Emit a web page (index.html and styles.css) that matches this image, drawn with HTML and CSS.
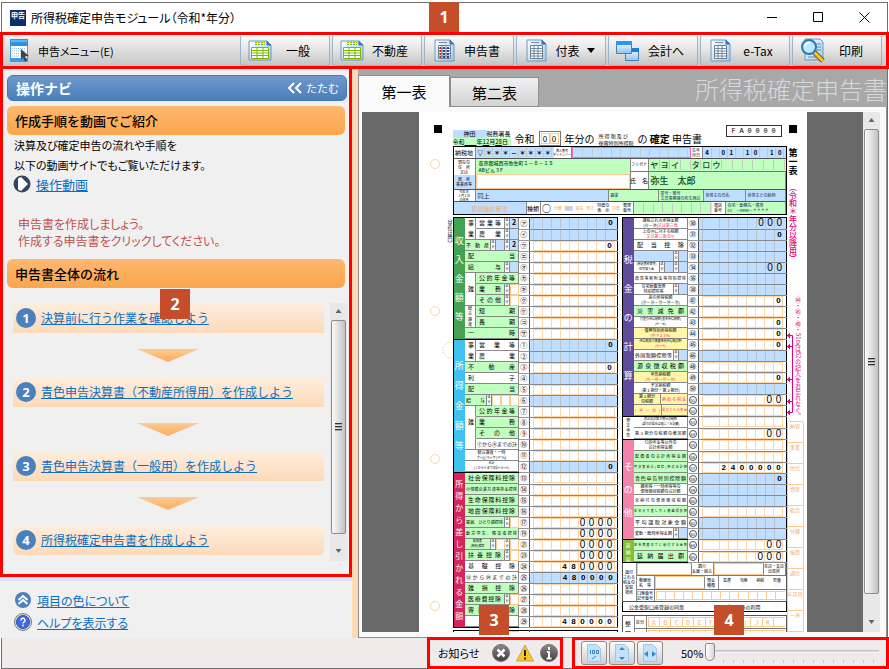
FILE: index.html
```html
<!DOCTYPE html>
<html lang="ja">
<head>
  <meta charset="UTF-8">
  <meta name="viewport" content="width=device-width, initial-scale=1.0">
  <title>所得税確定申告モジュール</title>
  <link rel="stylesheet" href="styles.css">
</head>
<body>

  <svg width="0" height="0" class="defs" aria-hidden="true">
    <defs>
      <linearGradient id="paperBlue" x1="0" y1="0" x2="1" y2="1"><stop offset="0" stop-color="#fff"/><stop offset="1" stop-color="#9cc8ef"/></linearGradient>
      <linearGradient id="winBlue" x1="0" y1="0" x2="0" y2="1"><stop offset="0" stop-color="#fff"/><stop offset="1" stop-color="#8cc4f2"/></linearGradient>
      <linearGradient id="darkRound" x1="0" y1="0" x2="0" y2="1"><stop offset="0" stop-color="#8a8a8a"/><stop offset="1" stop-color="#3c3c3c"/></linearGradient>
    </defs>
    <symbol id="sheet" viewBox="0 0 24 24">
      <path d="M3 1h15l4 4v17H3z" fill="url(#paperBlue)" stroke="#6d96bd"/>
      <path d="M18 1v4h4" fill="#2f84d0" stroke="#2a6fb0"/>
      <path d="M7 3.500h8" stroke="#6f8da8"/>
      <path d="M6.500 6.500h12v13h-12z" fill="#fff" stroke="#6d8196"/>
      <path d="M6 9.500h12M6 12h12M6 14.500h12M6 17h12M10 7v13M14 7v13" stroke="#71869b" fill="none"/>
    </symbol>
    <symbol id="greenSheet" viewBox="0 0 24 24">
      <path d="M1 2h18l4 4v15H1z" fill="url(#paperBlue)" stroke="#6d96bd"/>
      <path d="M19 2v4h4" fill="#2f84d0" stroke="#2a6fb0"/>
      <path d="M7 3.500h10M7 5.500h10" stroke="#7cb800" stroke-dasharray="2 1"/>
      <path d="M3.500 8.500h17v11h-17z" fill="#fff" stroke="#7cb800"/>
      <path d="M3 11.500h18M3 14h18M3 16.500h18M9 8v12M15 8v12" stroke="#7cb800" fill="none"/>
    </symbol>
  </svg>

  <div class="window">
    <header class="titlebar">
      <span class="app-icon">申告</span>
      <h1>所得税確定申告モジュール（令和*年分）</h1>
      <span class="callout callout-1">1</span>
      <div class="window-buttons">
        <button aria-label="最小化"><svg width="11" height="11"><path d="M0 5.500h10" stroke="#000"/></svg></button>
        <button aria-label="最大化"><svg width="11" height="11"><path d="M.5.5h9v9h-9z" stroke="#000" fill="none"/></svg></button>
        <button aria-label="閉じる"><svg width="11" height="11"><path d="M.5.5l10 10M10.500.5l-10 10" stroke="#000"/></svg></button>
      </div>
    </header>

    <div class="toolbar">
      <button class="menu-button">
        <svg width="20" height="24" viewBox="0 0 20 24"><path d="M.5.5h17v21H.5z" fill="#fff" stroke="#4b9de0"/><path d="M0 0h18v7H0z" fill="#2d93e6"/><path d="M1 2h16" stroke="#9ed4fb"/><path d="M2 9.500h14M2 12h14M2 14.500h14M2 17h14" stroke="#8fbfe8" stroke-dasharray="1 1"/><path d="M0 19h18v4H0z" fill="#3d9ae6"/><path d="M11 10l8 7-4 .5 2 4-2 1-2-4-2 2z" fill="#444"/></svg>
        申告メニュー(E)
      </button>
      <button><svg width="24" height="24"><use href="#greenSheet"/></svg><span>一般</span></button>
      <button><svg width="24" height="24"><use href="#greenSheet"/></svg><span>不動産</span></button>
      <button><svg width="24" height="24"><use href="#sheet"/><path d="M8.500 8v11" stroke="#c33" stroke-width="2" stroke-dasharray="2 1"/><path d="M12 8v11M16 8v11" stroke="#348" stroke-width="2" stroke-dasharray="2 1"/></svg><span>申告書</span></button>
      <button><svg width="24" height="24"><use href="#sheet"/></svg><span>付表</span><svg class="drop" width="8" height="5"><path d="M0 0h8L4 5z"/></svg></button>
      <button><svg width="24" height="24"><path d="M9.500 9.500h13v12h-13z" fill="url(#winBlue)" stroke="#4a7eb5"/><path d="M9 9h14v4H9z" fill="#1c7cd6"/><path d="M.5 2.500h15v12H.5z" fill="url(#winBlue)" stroke="#4a7eb5"/><path d="M0 2h16v4H0z" fill="#2e96ec"/></svg><span>会計へ</span></button>
      <button><svg width="24" height="24"><use href="#sheet"/></svg><span>e-Tax</span></button>
      <button><svg width="26" height="26"><path d="M5 1h15l3 3v18H5z" fill="url(#paperBlue)" stroke="#6d96bd"/><path d="M15 6h6M16 9h5M16 12h5M8 19h8" stroke="#5c8db8"/><path d="M14 14l9 9" stroke="#7a5a00" stroke-width="5"/><path d="M14 14l9 9" stroke="#ffc51c" stroke-width="3"/><circle cx="9" cy="9" r="7" fill="#bfe7fd" stroke="#2a78b4" stroke-width="2"/><path d="M5 8a4 4 0 0 1 5-3" stroke="#fff" stroke-width="2" fill="none"/></svg><span>印刷</span></button>
    </div>

    <div class="content">
      <aside class="side">
        <nav class="navi">
          <span class="callout callout-2">2</span>
          <div class="navi-head"><h2>操作ナビ</h2><button><svg width="15" height="12"><path d="M7 1L2 6l5 5M14 1L9 6l5 5" stroke="#fff" stroke-width="2" fill="none"/></svg>たたむ</button></div>
          <h3>作成手順を動画でご紹介</h3>
          <p class="intro">決算及び確定申告の流れや手順を<br>以下の動画サイトでもご覧いただけます。</p>
          <div class="icon-link">
            <svg width="18" height="18"><circle cx="9" cy="9" r="8.500" fill="#33475c"/><path d="M5 3.500l3-1.500 7 7-7 7-3-1.500z" fill="#fff"/></svg>
            <a href="#">操作動画</a>
          </div>
          <p class="notice">申告書を作成しましょう。<br>作成する申告書をクリックしてください。</p>
          <h3>申告書全体の流れ</h3>
          <div class="flow">
            <ol>
              <li><b>1</b><a href="#">決算前に行う作業を確認しよう</a></li>
              <li><b>2</b><a href="#">青色申告決算書（不動産所得用）を作成しよう</a></li>
              <li><b>3</b><a href="#">青色申告決算書（一般用）を作成しよう</a></li>
              <li><b>4</b><a href="#">所得税確定申告書を作成しよう</a></li>
            </ol>
            <div class="scrollbar"><i class="up"></i><span class="thumb"></span><i class="down"></i></div>
          </div>
        </nav>
        <div class="side-links">
          <div class="icon-link">
            <svg width="18" height="18"><circle cx="9" cy="9" r="8" fill="#4d80ba"/><path d="M4.500 9L9 5l4.500 4M4.500 13L9 9l4.500 4" stroke="#fff" stroke-width="2" fill="none"/></svg>
            <a href="#">項目の色について</a>
          </div>
          <div class="icon-link">
            <svg width="18" height="18"><circle cx="9" cy="9" r="8.500" fill="#ddd" stroke="#777"/><circle cx="9" cy="9" r="6.500" fill="#3d6ae0" stroke="#2a4fb5"/><path d="M7 7.500a2 2 0 1 1 3 1.500q-1 .5-1 1.500M9 11.500v2" stroke="#fff" stroke-width="1.500" fill="none"/></svg>
            <a href="#">ヘルプを表示する</a>
          </div>
        </div>
      </aside>

      <main class="document">
        <div class="tabs">
          <button class="active">第一表</button><button>第二表</button>
          <span class="doc-title">所得税確定申告書</span>
        </div>
        <div class="viewer">
          <div class="desk">
            <div class="paper">
              <div class="gutter">
                <svg width="28" height="520"><path d="M15 13h8v8h-8z"/><g fill="none" stroke="#fcd3a0"><circle cx="16" cy="52" r="4.500"/><circle cx="16" cy="199" r="4.500"/><circle cx="16" cy="347" r="4.500"/><circle cx="16" cy="494" r="4.500"/><circle cx="32" cy="238" r="8" stroke-dasharray="2 1"/></g></svg>
                <span>（単位は円）</span>
              </div>
              <div class="form">
                <div class="form-head">
                  <div class="office"><div><span class="blue">神田</span>税務署長</div><div class="green">令和<u>　　</u>年<u>12</u>月<u>28</u>日</div></div>
                  <span class="era">令和</span><span class="year"><i>0</i><i>0</i></span><span class="era">年分の</span>
                  <span class="tax-name">所 得 税 及 び<br>復興特別所得税</span>
                  <span class="era">の <b>確定</b> 申告書</span>
                  <span class="form-code"><i>F</i><i>A</i><i>0</i><i>0</i><i>0</i><i>0</i></span>
                </div>

                <div class="taxpayer">
                  <div class="line h12">
                    <span class="lab mid w22">納税地</span><span class="boxes blue w78 stars" data-text="▽＊＊＊－＊＊＊＊"></span><span class="lab tiny w18">個人番号<br>マイナンバー</span><span class="boxes blue grow pink" data-text="　　　　　　　　　　　　"></span><span class="lab w12">生年<br>月日</span><span class="boxes blue w83 bold" data-text="4 01 10 10"></span>
                  </div>
                  <div class="line h31">
                    <div class="stack w22"><span class="lab grow">現在の<br>住　所<br>又は</span><span class="lab blue h14">居　所<br>事業所等</span></div>
                    <div class="stack address"><p class="green">東京都城西市弥生町１－８－１５<br>ABビル３F</p><p></p></div>
                    <div class="stack grow">
                      <div class="line h12"><span class="lab w18">フリガナ</span><span class="boxes green grow name" data-text="ヤヨイ　タロウ　　　　　　"></span></div>
                      <div class="line h19"><span class="lab mid w18">氏　名</span><span class="fill green grow name">弥生　太郎</span></div>
                    </div>
                  </div>
                  <div class="line h12">
                    <span class="lab tiny w22">令和 年<br>１月１日<br>の住所</span><span class="fill blue mid w133">同上</span><span class="fill green w50">職業</span><span class="fill green grow">屋号・雅号<br>文具事務機の弥生商店</span><span class="fill blue w42">世帯主の氏名</span><span class="fill blue w40">世帯主との続柄</span>
                  </div>
                  <div class="line h12">
                    <span class="lab mid blue w73 faint">振替継続希望</span><span class="lab mid w14">種類</span><span class="kind faint grow"><b>○</b><i>分離</i><i class="blue">国出</i><i>損失</i><i>修正</i><em>特農の<br>表　示</em><i>特農</i></span><span class="lab w12">整理<br>番号</span><span class="boxes green w78" data-text="　　　　　　　　"></span><span class="lab w14">電話<br>番号</span><span class="fill green w60">自宅・勤務先・携帯<br>03　－9999－＊＊＊＊</span>
                  </div>
                </div>

                <div class="columns">
                  <div>
                    <table id="incomeTable"></table>
                    <table id="afterTable"></table>
                  </div>
                  <div>
                    <table id="taxTable"></table>
                    <div class="refund">
                      <span class="lab w14">還付<br>される<br>税金の<br>受取<br>場所</span>
                      <div class="stack grow">
                        <div class="line h12"><span class="entry grow"></span><span class="lab w22">銀行<br>金庫・組合</span><span class="entry w50"></span><span class="lab w22">本店・支店<br>出張所</span></div>
                        <div class="line h14"><span class="lab w18">郵便局<br>名　等</span><span class="entry w50"></span><span class="lab w14">預金<br>種類</span><span class="kind grow"><span>普通<br><i>○</i></span><span>当座<br><i>○</i></span><span>納税<br><i>○</i></span><span>貯蓄<br><i>○</i></span></span></div>
                        <div class="line h12"><span class="lab w18">口座番号<br>記号番号</span><span class="boxes grow" data-text="　　　　　　　　　　　　　　"></span></div>
                      </div>
                    </div>
                    <div class="public line"><span>公金受取口座登録の同意</span><i>○</i><span>公金受取口座の利用</span><i>○</i></div>
                    <div class="office-use">
                      <span class="lab mid w12">整<br><br>理</span>
                      <div class="stack grow">
                        <div class="line h12"><span class="lab w12">区分</span><span class="boxes grow faint" data-text="ABCDEFGHIJK　"></span></div>
                        <div class="line h12"><span class="lab w12">異動</span><span class="boxes grow faint" data-text="　　年　　月　　日　　　"></span></div>
                      </div>
                    </div>
                  </div>
                </div>
              </div>

              <div class="margin-notes">
                <svg width="8" height="8"><path d="M0 0h8v8H0z"/></svg>
                <b class="sheet-name">第一表</b>
                <span class="version">（令和＊年分以降用）</span>
                <div class="reminder">
                  <svg width="7" height="122" fill="none" stroke="#e6007e"><path d="M0 38.500h5.500v77H0M0 49.500h5M0 82.500h5M0 104.500h5"/><path fill="#e6007e" stroke="none" d="M0 38.500l3-3v6zM0 49.500l3-3v6zM0 82.500l3-3v6zM0 104.500l3-3v6zM0 115.500l3-3v6z"/></svg>
                  <span>㊹・㊺・㊾・51又は52の記入をお忘れなく。</span>
                </div>
                <div class="stamps"><i>納管</i><i>事業</i><i>住民</i><i>資産</i><i>総合</i><i>分離</i><i>検算</i><i>通信</i><i>年月日</i><i>一連</i></div>
              </div>
            </div>
          </div>
          <div class="scrollbar"><i class="up"></i><span class="thumb"></span><i class="down"></i></div>
        </div>
      </main>
    </div>

    <footer class="statusbar">
      <div class="news">
        <span class="callout callout-3">3</span>
        <span>お知らせ</span>
        <svg width="18" height="18"><circle cx="9" cy="9" r="8.500" fill="url(#darkRound)" stroke="#777"/><path d="M5.500 5.500l7 7M12.500 5.500l-7 7" stroke="#fff" stroke-width="2.500"/></svg>
        <svg width="18" height="18"><path d="M9 1l8.500 16H.5z" fill="#ffc81e" stroke="#b5a26a"/><path d="M9 6v6M9 13.500v2" stroke="#222" stroke-width="2"/></svg>
        <svg width="18" height="18"><circle cx="9" cy="9" r="8.500" fill="url(#darkRound)" stroke="#777"/><path d="M9 3v3M9 7.500V15M7 8h2M6.500 14.500h5" stroke="#fff" stroke-width="2"/></svg>
      </div>
      <div class="zoom">
        <span class="callout callout-4">4</span>
        <button aria-label="100%"><svg width="14" height="18"><path d="M.5.5h9l4 4v13H.5z" fill="#c4e2fa" stroke="#a5c3dd"/><path d="M3.500 6v4M5.500 6.500h2v3h-2zM9.500 6.500h2v3h-2zM5 15l4-3" stroke="#3486cf" fill="none"/></svg></button>
        <button aria-label="全体表示"><svg width="14" height="18"><path d="M.5.5h9l4 4v13H.5z" fill="#c4e2fa" stroke="#a5c3dd"/><path d="M7 3l3 3H4zM7 16l3-3H4z" fill="#3486cf"/></svg></button>
        <button aria-label="幅に合わせる"><svg width="14" height="18"><path d="M.5.5h9l4 4v13H.5z" fill="#c4e2fa" stroke="#a5c3dd"/><path d="M1 10l4-3v6zM13 10l-4-3v6z" fill="#3486cf"/></svg></button>
        <label for="zoomRange">50%</label>
        <div class="slider"><input type="range" id="zoomRange" min="50" max="200" value="50"></div>
      </div>
    </footer>
  </div>

  <script src="script.js"></script>
</body>
</html>
```
FILE: styles.css
```css
* {
  box-sizing: border-box;
}

body {
  margin: 0;
  background: #fff;
  color: #000;
  font-family: "Noto Sans CJK JP", sans-serif;
  font-size: 12px;
}

h1, h2, h3, p, ol {
  margin: 0;
  padding: 0;
  font-weight: normal;
}

button {
  font: inherit;
  color: inherit;
  border: none;
  padding: 0;
  background: none;
  cursor: pointer;
}

a {
  color: #0a6fc2;
}

i, em {
  font-style: normal;
}

svg {
  display: block;
  flex: none;
}

.defs {
  position: absolute;
}

.window {
  display: flex;
  flex-direction: column;
  height: calc(100vh - 2px);
  margin: 2px 1px 0;
  border: 1px solid #6e6e6e;
}

.callout {
  position: absolute;
  z-index: 2;
  width: 30px;
  height: 30px;
  background: #c44d2a;
  color: #fff;
  font: bold 16px/30px "Open Sans", sans-serif;
  text-align: center;
}

.callout-1 { left: 427px; top: -1px; }
.callout-2 { left: 157px; top: 220px; }
.callout-3 { left: 49px; top: -35px; }
.callout-4 { left: 139px; top: -35px; }

/* title bar */
.titlebar {
  position: relative;
  flex: none;
  display: flex;
  align-items: center;
  height: 29px;
  padding-left: 8px;
  gap: 5px;
}

.titlebar h1 {
  font-size: 12px;
  font-feature-settings: "palt";
}

.app-icon {
  width: 16px;
  height: 16px;
  background: #0b2f6b;
  color: #fff;
  font-size: 7px;
  line-height: 10px;
  text-align: center;
  font-weight: bold;
}

.window-buttons {
  display: flex;
  margin-left: auto;
}

.window-buttons button {
  display: flex;
  justify-content: center;
  align-items: center;
  width: 46px;
  height: 29px;
}

/* toolbar */
.toolbar {
  flex: none;
  display: flex;
  gap: 2px;
  height: 37px;
  margin: 0 -2px;
  padding-right: 4px;
  border: 3px solid #f00;
  background: linear-gradient(#f4f4f4, #c6c6c6);
}

.toolbar button {
  display: flex;
  align-items: center;
  width: 90px;
  padding: 0 5px 0 7px;
  border: 1px solid #9cb4cb;
  border-top-color: #fff;
  border-radius: 3px;
  background: linear-gradient(#fbfbfb, #e4e4e4 50%, #c4c4c4);
}

.toolbar span {
  flex: 1;
  text-align: center;
}

.toolbar .drop {
  margin-right: 5px;
}

.toolbar .menu-button {
  flex: 1;
  gap: 8px;
  border: none;
  background: none;
  font-size: 11px;
  font-feature-settings: "palt";
}

.content {
  flex: 1;
  display: flex;
  min-height: 0;
}

/* left side */
.side {
  flex: none;
  display: flex;
  flex-direction: column;
  width: 358px;
  margin-left: -2px;
  border-right: 6px solid #fdd9b5;
  background: #f0f0f0;
}

.navi {
  position: relative;
  flex: 1;
  display: flex;
  flex-direction: column;
  padding: 6px 2px 0 4px;
  border: 3px solid #f00;
  border-top: none;
}

.navi-head {
  display: flex;
  justify-content: space-between;
  align-items: center;
  height: 26px;
  padding: 0 7px 0 8px;
  border: 1px solid #4179b5;
  border-radius: 6px;
  background: linear-gradient(#6f98cb, #4a7fbc);
  color: #fff;
}

.navi-head h2 {
  font-size: 14px;
  font-weight: bold;
}

.navi-head button {
  display: flex;
  align-items: center;
  gap: 4px;
  font-size: 11px;
}

.navi h3 {
  height: 29px;
  margin: 5px 2px 0 0;
  padding-left: 8px;
  border-radius: 6px;
  background: linear-gradient(#fdb771, #fba64c);
  font-size: 13px;
  font-weight: 500;
  line-height: 29px;
}

.intro {
  padding-left: 7px;
  font-size: 11px;
  line-height: 20px;
  font-feature-settings: "palt";
}

.icon-link {
  display: flex;
  align-items: center;
  gap: 5px;
  height: 18px;
  padding-left: 6px;
  font-size: 12px;
  font-feature-settings: "palt";
}

.navi .icon-link {
  font-size: 13px;
}

.notice {
  padding: 22px 0 5px 11px;
  color: #c0504d;
  line-height: 17px;
  font-feature-settings: "palt";
}

.flow {
  display: flex;
  justify-content: space-between;
  margin: 15px 0 0 6px;
}

.flow ol {
  width: 311px;
  list-style: none;
}

.flow li {
  display: flex;
  flex-wrap: wrap;
  align-items: center;
  align-content: flex-start;
  gap: 0 5px;
  height: 74px;
  padding-left: 3px;
  border-radius: 5px;
  background: linear-gradient(#fdeedf, #fdd9b8) top / 100% 30px no-repeat;
}

.flow li:not(:last-child)::after {
  content: "";
  width: 62px;
  height: 13px;
  margin: 16px 0 0 121px;
  background: linear-gradient(#fdcb93, #fbac5c);
  clip-path: polygon(0 0, 100% 0, 50% 100%);
}

.flow li:last-child {
  height: 30px;
}

.flow a {
  padding-bottom: 2px;
}

.flow b {
  width: 20px;
  height: 20px;
  margin: 5px 0;
  border-radius: 50%;
  background: #4a80bd;
  color: #fff;
  font: bold 13px/20px "Open Sans", sans-serif;
  text-align: center;
}

.scrollbar {
  display: flex;
  flex-direction: column;
  align-items: center;
  width: 17px;
  background: #e8e8e8;
}

.flow .scrollbar {
  height: 258px;
}

.scrollbar .thumb {
  flex: 1;
  display: flex;
  justify-content: center;
  align-items: center;
  width: 15px;
  border: 1px solid #8c8c8c;
  border-radius: 2px;
  background: linear-gradient(90deg, #fafafa, #e2e2e2 45%, #c2c2c2);
}

.thumb::after {
  content: "";
  width: 7px;
  height: 8px;
  background: repeating-linear-gradient(#333 0 1px, #aaa 1px 2px, transparent 2px 3px);
}

.up, .down {
  width: 6px;
  height: 4px;
  margin: 6px 0 7px;
  background: #666;
  clip-path: polygon(50% 0, 100% 100%, 0 100%);
}

.down {
  margin: 15px 0 8px;
  clip-path: polygon(0 0, 100% 0, 50% 100%);
}

.viewer .down {
  margin: 26px 0 8px;
}

.side-links {
  flex: none;
  display: flex;
  flex-direction: column;
  gap: 4px;
  height: 61px;
  padding: 10px 0 0 8px;
  border-top: 4px solid #dbe5f1;
}

/* document viewer */
.document {
  flex: 1;
  display: flex;
  flex-direction: column;
  min-width: 0;
  background: #a8a8a8;
}

.tabs {
  display: flex;
  align-items: flex-end;
  height: 38px;
  padding-top: 6px;
}

.tabs button {
  width: 89px;
  height: 30px;
  border: 1px solid #8e8e8e;
  background: linear-gradient(#f2f2f2, #d2d2d2);
  font-size: 15px;
}

.tabs .active {
  width: 92px;
  height: 32px;
  border-bottom: none;
  background: #fafafa;
}

.doc-title {
  margin-left: auto;
  color: #d8d8d8;
  font-size: 24px;
  font-weight: 300;
  line-height: 36px;
  white-space: nowrap;
}

.viewer {
  flex: 1;
  display: flex;
  min-height: 0;
  padding: 5px 6px 5px 3px;
  border: 1px solid #8e8e8e;
  border-top: none;
  background: #fafafa;
}

.desk {
  flex: 1;
  display: flex;
  justify-content: center;
  overflow: hidden;
  background: #696969;
}

/* tax form */
.paper {
  display: grid;
  grid-template-columns: 34px 334px 20px;
  flex: none;
  background: #fff;
  font-size: 6px;
  line-height: 6px;
}

.blue { background: #c0deff; }
.green { background: #c0ffc0; }
.faint { color: #f2ae6c; }

.gutter {
  display: flex;
}

.gutter svg {
  overflow: visible;
}

.gutter span {
  writing-mode: vertical-rl;
  margin-top: 104px;
  font-size: 5px;
}

.form-head {
  display: flex;
  align-items: flex-end;
  gap: 4px;
  height: 34px;
}

.office {
  width: 58px;
  line-height: 8px;
  white-space: nowrap;
}

.office .blue {
  display: inline-block;
  width: 34px;
  text-align: center;
}

.era {
  font-size: 10px;
  line-height: 15px;
  white-space: nowrap;
}

.year {
  display: flex;
  padding: 1px;
  border: 1px solid #777;
}

.year i {
  width: 9px;
  border: 1px solid #fcc98e;
  font-size: 8px;
  line-height: 9px;
  text-align: center;
}

.tax-name {
  font-size: 5px;
  line-height: 7px;
  white-space: nowrap;
}

.form-code {
  align-self: flex-start;
  display: flex;
  width: 56px;
  margin: 13px 5px 0 auto;
  padding: 0 3px;
  border: 1px solid #333;
  font: 7px/10px "Liberation Mono", monospace;
}

.form-code i {
  flex: 1;
  text-align: center;
}

.taxpayer {
  border: 1px solid #000;
  margin-bottom: 2px;
}

.line {
  display: flex;
}

.stack {
  display: flex;
  flex-direction: column;
}

.taxpayer > .line {
  border-bottom: 1px solid #555;
}

.taxpayer > .line:last-child {
  border-bottom: none;
}

.h12 { height: 12px; }
.h14 { height: 14px; }
.h19 { height: 19px; }
.h31 { height: 31px; }
.w12 { width: 12px; }
.w14 { width: 14px; }
.w18 { width: 18px; }
.w22 { width: 22px; }
.w40 { width: 40px; }
.w42 { width: 42px; }
.w50 { width: 50px; }
.w60 { width: 60px; }
.w73 { width: 73px; }
.w78 { width: 78px; }
.w83 { width: 83px; }
.w133 { width: 133px; }

.grow {
  flex: 1;
  min-width: 0;
}

.lab, .fill {
  display: flex;
  align-items: center;
  border-right: 1px solid #888;
  font-size: 4px;
  line-height: 5px;
  white-space: nowrap;
}

.lab {
  justify-content: center;
  text-align: center;
}

.fill {
  padding-left: 2px;
  color: #14325a;
}

.lab, .fill, .boxes {
  flex-shrink: 0;
}

.mid {
  font-size: 6px;
}

.tiny {
  font-size: 3px;
  line-height: 4px;
}

.boxes {
  display: flex;
  padding: 1px;
}

.boxes.grow {
  flex-shrink: 1;
}

.boxes i {
  flex: 1;
  min-width: 0;
  border-right: 1px solid #c2c9bd;
  font-size: 6px;
  line-height: 9px;
  text-align: center;
}

.stars i, .bold i {
  font-weight: bold;
}

.pink {
  border: 1px solid #e875bb;
}

.address {
  width: 155px;
  border-right: 1px solid #888;
}

.address p {
  height: 15px;
  padding-left: 3px;
  font-size: 5px;
  font-weight: 500;
  line-height: 7px;
  color: #0c4a1c;
}

.address p + p {
  flex: 1;
  border: 1px solid #fcc98e;
}

.name {
  font-size: 9px;
  font-weight: 500;
  color: #0c4a1c;
}

.name i {
  font-size: 8px;
}

.stack > .line + .line {
  border-top: 1px solid #777;
}

.kind {
  display: flex;
  justify-content: space-around;
  align-items: center;
  font-size: 4px;
  line-height: 5px;
  text-align: center;
  white-space: nowrap;
}

.kind b {
  color: #000;
  font-size: 9px;
}

.kind em {
  color: #000;
}

.kind i {
  color: #f2ae6c;
}

.columns {
  display: flex;
  gap: 4px;
}

.columns > div {
  width: 165px;
}

table {
  width: 165px;
  border-collapse: collapse;
  table-layout: fixed;
  border: 1px solid #000;
}

td {
  height: 11px;
  padding: 0;
}

tbody + tbody {
  border-top: 1px solid #000;
}

.col-band { width: 12px; }
.col-label { width: 54px; }
.col-no { width: 10px; }

.band {
  color: #fff;
  font-size: 9px;
  text-align: center;
}

.band-income { background: #44a352; line-height: 19px; }
.band-profit { background: #3fc2f0; line-height: 20px; }
.band-deduct { background: #d4265e; font-size: 8px; line-height: 12px; }
.band-tax { background: #5f4b9b; line-height: 29px; }
.band-other { background: #f283ab; line-height: 23px; }
.band-fix { color: #000; font-size: 4px; line-height: 5px; }
.band-delay { background: #84bd36; font-size: 5px; line-height: 7px; }

.parts {
  display: flex;
  height: 11px;
}

.parts span {
  flex: 1;
  min-width: 0;
  padding: 0 3px;
  border-right: 1px solid #888;
  border-bottom: 1px solid #888;
  font-size: 6px;
  line-height: 10px;
  text-align-last: justify;
  white-space: nowrap;
}

.parts span.small {
  padding: 0 1px;
  font-size: 5px;
}

.parts span.smaller {
  padding: 0 1px;
  font-size: 4px;
}

.parts span.two {
  padding: 0 1px;
  font-size: 4px;
  line-height: 5px;
  text-align-last: center;
}

.parts span.tiny {
  padding: 0;
  font-size: 3px;
}

.parts span.kubun,
.parts span.box {
  flex: none;
  width: 5px;
  padding: 0;
  font-size: 3px;
  line-height: 5px;
  text-align-last: center;
}

.parts span.box {
  width: 9px;
  font-size: 7px;
  font-weight: bold;
  line-height: 9px;
}

.parts .side-char {
  flex: none;
  width: 11px;
}

.parts .open {
  border-bottom-color: transparent;
}

.parts .yellow { background: #fff6a8; }
.parts .orange { border: 1px solid #fcc98e; }
.parts .red { color: #f0356b; }

.no {
  border-right: 1px solid #555;
  border-bottom: 1px solid #999;
  font-size: 7px;
  line-height: 9px;
  text-align: center;
}

.no i {
  display: block;
  width: 8px;
  height: 8px;
  margin: 0 auto;
  border: 1px solid #555;
  border-radius: 50%;
  font-size: 4px;
  line-height: 6px;
}

.amount {
  border-bottom: 1px solid #888;
}

.digits {
  display: flex;
  height: 10px;
  padding: 0 2px 0 3px;
}

.digits i {
  flex: 1;
  border: 1px solid #fcd5a8;
  border-width: 1px 0 1px 1px;
  font: bold 8px/8px "Liberation Sans", sans-serif;
  text-align: center;
}

.digits i:last-child {
  border-right-width: 1px;
}

#taxTable .digits i:first-child {
  flex: 2;
}

.amount.blue i {
  border-color: #b5c3cc;
  border-width: 0 0 0 1px;
  line-height: 10px;
}

.digits i.pre {
  font-size: 10px;
  font-weight: normal;
}

#afterTable {
  margin-top: 2px;
}

.refund, .office-use {
  display: flex;
  border: 1px solid #555;
}

.refund {
  border-top: none;
}

.entry {
  flex-shrink: 0;
  border: 1px solid #fcc98e;
  border-right-color: #888;
}

.public {
  justify-content: space-around;
  align-items: center;
  height: 10px;
  border: 1px solid #000;
  border-top: none;
  font-size: 5px;
}

.public i {
  color: #fcc98e;
}

.office-use {
  margin-top: 3px;
}

.office-use .boxes i,
.refund .boxes i {
  border: 1px solid #fcc98e;
  border-right: none;
}

/* notes in the right margin of the form */
.margin-notes {
  padding: 13px 0 0 2px;
}

.sheet-name, .version, .reminder span {
  display: block;
  writing-mode: vertical-rl;
  font-size: 8px;
  line-height: 9px;
  white-space: nowrap;
}

.sheet-name {
  height: 35px;
  margin-top: 15px;
  font-size: 9px;
}

.version {
  height: 114px;
  color: #e6007e;
  font-weight: 500;
}

.reminder {
  display: flex;
  height: 124px;
  margin-left: -2px;
}

.reminder span {
  font-size: 6px;
  color: #e6007e;
}

.stamps {
  width: 17px;
  margin-left: -2px;
  border: 1px solid #fcc98e;
  border-radius: 2px;
}

.stamps i {
  display: block;
  height: 21px;
  padding-top: 1px;
  border-bottom: 1px solid #fcc98e;
  color: #f2ae6c;
  font-size: 5px;
  text-align: center;
}

/* status bar */
.statusbar {
  flex: none;
  display: flex;
  justify-content: flex-end;
  gap: 9px;
  height: 30px;
  margin-right: -2px;
  background: #f0ebeb;
}

.news, .zoom {
  position: relative;
  display: flex;
  align-items: center;
  height: 32px;
  margin-top: -1px;
  border: 3px solid #f00;
}

.news {
  width: 136px;
  gap: 6px;
  padding-left: 8px;
}

.news span:not(.callout) {
  flex: 1;
  font-size: 11px;
  font-feature-settings: "palt";
}

.news svg:last-child {
  margin-right: 2px;
}

.zoom {
  width: 317px;
  gap: 2px;
  padding: 0 7px 0 6px;
}

.zoom button {
  display: flex;
  justify-content: center;
  align-items: center;
  width: 26px;
  height: 24px;
  border: 1px solid #8e8e8e;
  border-radius: 3px;
  background: linear-gradient(#fdfdfd, #cfcfcf);
}

.zoom label {
  margin-left: 16px;
  font-size: 11px;
}

.slider {
  flex: 1;
  height: 24px;
  padding-top: 1px;
  background: repeating-linear-gradient(90deg, transparent 0 9px, #c4c4c4 9px 10px) right 0 bottom 2px / 165px 3px no-repeat;
}

input[type="range"] {
  display: block;
  appearance: none;
  width: 100%;
  height: 19px;
  margin: 0;
  background: linear-gradient(#b5b5b5, #fff) center 8px / 100% 3px no-repeat;
}

input[type="range"]::-webkit-slider-thumb {
  appearance: none;
  width: 10px;
  height: 18px;
  border: 1px solid #8a8a8a;
  border-radius: 2px 2px 5px 5px;
  background: linear-gradient(90deg, #fff, #d8d8d8);
}
```
FILE: script.js
```js
// label parts: w white, g green, b blue, y yellow, n white without a bottom line
// s: narrow side column, k: 区分, x: entry box, "/" splits a label in two lines
// in the amounts, "O" is a printed zero
const income = [
  { band: '収入金額等', cls: 'band-income', rows: [
    ['㋐', 'sn:事 w:営業等 k xb:2', 'b', '0'],
    ['㋑', 'sw:業 w:農業 k xb:', 'b', ''],
    ['㋒', 'g:不動産 k xb: k xb:2', 'w', '0'],
    ['㋓', 'g:配当', 'w', ''],
    ['㋔', 'g:給与 k xb:', 'w', ''],
    ['㋕', 'sn: g:公的年金等', 'w', ''],
    ['㋖', 'sn:雑 g:業務 k xo:', 'w', ''],
    ['㋗', 'sw: g:その他 k xo:', 'w', ''],
    ['㋘', 'sn:総/合 g:短期', 'w', ''],
    ['㋙', 'sw:譲/渡 g:長期', 'w', ''],
    ['㋚', 'g:一時', 'w', '']
  ] },
  { band: '所得金額等', cls: 'band-profit', rows: [
    [1, 'sn:事 w:営業等', 'b', '0'],
    [2, 'sw:業 w:農業', 'b', ''],
    [3, 'g:不動産', 'w', '0'],
    [4, 'w:利子', 'b', ''],
    [5, 'g:配当', 'w', ''],
    [6, 'g:給与 k xo: xo: xo:', 'b', ''],
    [7, 'sn: g:公的年金等', 'w', ''],
    [8, 'sn:雑 g:業務', 'w', ''],
    [9, 'sn: g:その他', 'w', ''],
    [10, 'sw: w:⑦から⑨までの計', 'w', ''],
    [11, 'w:総合譲渡・一時/㋘+{(㋙+㋚)×½}', 'w', ''],
    [12, 'w:合計/(①から⑥までの計+⑩+⑪)', 'b', '0']
  ] },
  { band: '所得から差し引かれる金額', cls: 'band-deduct', rows: [
    [13, 'g:社会保険料控除', 'w', ''],
    [14, 'g:小規模企業共済等掛金控除', 'w', ''],
    [15, 'g:生命保険料控除', 'w', ''],
    [16, 'g:地震保険料控除', 'w', ''],
    [17, 'g:寡婦、ひとり親控除 k xo:', 'w', 'OOOO'],
    [19, 'g:勤労学生、障害者控除', 'w', 'OOOO'],
    [21, 'g:配偶者/(特別)控除 k xo: k xo:', 'w', 'OOOO'],
    [23, 'g:扶養控除 k xo:', 'w', 'OOOO'],
    [24, 'w:基礎控除', 'w', '48OOOO'],
    [25, 'w:⑬から㉔までの計', 'b', '480000'],
    [26, 'g:雑損控除', 'w', ''],
    [27, 'g:医療費控除 k xo:', 'w', ''],
    [28, 'g:寄附金控除', 'w', ''],
    [29, 'w:合計/(㉕+㉖+㉗+㉘)', 'w', '480000']
  ] }
];

const tax = [
  { band: '税金の計算', cls: 'band-tax', rows: [
    [30, 'w:課税される所得金額/(⑫－㉙)*又は第三表', 'b', 'OOO'],
    [31, 'w:上の㉚に対する税額/*又は第三表の㊷', 'b', '0'],
    [32, 'w:配当控除', 'b', ''],
    [33, 'b: k xb:', 'b', ''],
    [34, 'w:(特定増改築等)/住宅借入金 k xb: k xb:', 'b', 'OO'],
    [35, 'w:政党等寄附金等特別控除', 'b', ''],
    [38, 'w:住宅耐震改修/特別控除等 k xb:', 'b', ''],
    [41, 'w:差引所得税額/(㉛－㉜－㉝－㉞－㉟)', 'w', '0'],
    [42, 'g:災害減免額', 'w', ''],
    [43, 'w:再差引所得税額(基準所得税額)/(㊶－㊷)', 'w', '0'],
    [44, 'y:復興特別所得税額/*(㊸×2.1%)', 'w', '0'],
    [45, 'y:所得税及び復興特別所得税の額/*(㊸＋㊹)', 'w', '0'],
    [46, 'w:外国税額控除等 k xb:', 'b', ''],
    [48, 'g:源泉徴収税額', 'w', ''],
    [49, 'y:申告納税額/*(㊺－㊻－㊼－㊽)', 'w', '0'],
    [50, 'w:予定納税額/(第１期分・第２期分)', 'b', ''],
    [51, 'y:第３期分/の税額 y:*納める税金', 'w', 'OO'],
    [52, 'y:*(㊾－㊿) y:*還付される税金', 'w', '']
  ] },
  { band: '修正申告', cls: 'band-fix', rows: [
    [53, 'w:修正前の第３期分の税額/(還付の場合は頭に△を記載)', 'w', ''],
    [54, 'w:第３期分の税額の増加額', 'w', 'OO']
  ] },
  { band: 'その他', cls: 'band-other', rows: [
    [55, 'w:公的年金等以外の/合計所得金額', 'w', ''],
    [56, 'g:配偶者の合計所得金額', 'w', ''],
    [57, 'g:専従者給与(控除)額の合計額', 'w', '2400000'],
    [58, 'g:青色申告特別控除額', 'b', '0'],
    [59, 'w:雑所得・一時所得等の/源泉徴収税額の合計額', 'b', ''],
    [60, 'w:未納付の源泉徴収税額', 'b', ''],
    [61, 'g:本年分で差し引く繰越損失額', 'w', ''],
    [62, 'w:平均課税対象金額', 'b', ''],
    [63, 'w:変動・臨時所得金額 k xb:', 'b', '']
  ] },
  { band: '延納届', cls: 'band-delay', rows: [
    [64, 'g:申告期限までに納付する金額', 'w', 'OO'],
    [65, 'g:延納届出額', 'w', 'OOO']
  ] }
];

const after = [
  { band: '', cls: 'band-fix', rows: [['', 'w:区分 xo: xo:', 'w', '']] }
];

const tones = { w: '', n: 'open', g: 'green', b: 'blue', y: 'yellow', o: 'orange' };

function circled(no) {
  if (typeof no === 'string') return no;
  if (no <= 20) return String.fromCharCode(0x2460 + no - 1);
  if (no <= 35) return String.fromCharCode(0x3251 + no - 21);
  if (no <= 50) return String.fromCharCode(0x32b1 + no - 36);
  return '<i>' + no + '</i>';
}

// room: how many characters of 4px the part can hold
function labelPart(part, room) {
  if (part === 'k') return '<span class="kubun">区<br>分</span>';
  const [kind, text] = part.split(':');
  const classes = [tones[kind.slice(-1)]];
  const longest = Math.max(...text.replace(/\*/g, '').split('/').map(line => line.length));
  if (kind[0] === 's') classes.push('side-char');
  if (kind[0] === 'x') classes.push('box');
  if (text.includes('/')) classes.push('two');
  else if (longest > room * 4 / 5) classes.push('smaller');
  else if (longest > room * 4 / 6 - 1) classes.push('small');
  if (longest > room && kind[0] !== 'x' && kind[0] !== 's') classes.push('tiny');
  const html = text.split('/').map(line => {
    const at = line.indexOf('*');
    return at < 0 ? line : line.slice(0, at) + '<em class="red">' + line.slice(at + 1) + '</em>';
  }).join('<br>');
  return '<span class="' + classes.join(' ').trim() + '">' + html + '</span>';
}

function labelParts(label) {
  const parts = label.split(' ');
  let width = 54;
  let wide = 0;
  parts.forEach(part => {
    if (part === 'k') width -= 5;
    else if (part[0] === 'x') width -= 9;
    else if (part[0] === 's') width -= 11;
    else wide++;
  });
  const room = Math.floor((width / wide - 3) / 4);
  return parts.map(part => labelPart(part, part[0] === 's' ? 9 : room)).join('');
}

function digits(value, length) {
  return value.padStart(length, ' ').split('').map(c =>
    c === 'O' ? '<i class="pre">0</i>' : '<i>' + c.trim() + '</i>'
  ).join('');
}

function drawTable(id, groups, length) {
  let html = '<colgroup><col class="col-band"><col class="col-label"><col class="col-no"><col></colgroup>';
  groups.forEach(group => {
    html += '<tbody>';
    group.rows.forEach(([no, label, tone, value], i) => {
      html += '<tr>';
      if (i === 0) {
        html += '<td class="band ' + group.cls + '" rowspan="' + group.rows.length + '">' + group.band.split('').join('<br>') + '</td>';
      }
      html += '<td><div class="parts">' + labelParts(label) + '</div></td>';
      html += '<td class="no">' + circled(no) + '</td>';
      html += '<td class="amount ' + tones[tone] + '"><div class="digits">' + digits(value, length) + '</div></td></tr>';
    });
    html += '</tbody>';
  });
  document.getElementById(id).innerHTML = html;
}

drawTable('incomeTable', income, 9);
drawTable('taxTable', tax, 8);
drawTable('afterTable', after, 9);

document.querySelectorAll('.boxes').forEach(box => {
  box.innerHTML = box.dataset.text.split('').map(c => '<i>' + c + '</i>').join('');
});
```
